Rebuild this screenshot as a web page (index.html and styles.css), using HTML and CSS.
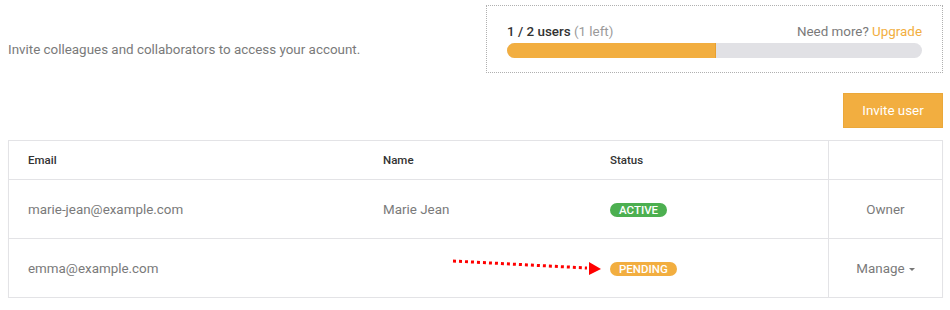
FILE: index.html
```html
<!DOCTYPE html>
<html lang="en">
<head>
    <meta charset="UTF-8">
    <meta name="viewport" content="width=device-width, initial-scale=1.0">
    <title>Users</title>
    <link rel="stylesheet" href="styles.css">
</head>
<body>

    <!-- Topo: descricao + uso do plano -->
    <div class="topo">
        <p class="descricao">Invite colleagues and collaborators to access your account.</p>

        <div class="uso">
            <div class="uso-linha">
                <span><strong>1 / 2 users</strong> <span class="restante">(1 left)</span></span>
                <span class="mais">Need more? <a href="#" class="upgrade">Upgrade</a></span>
            </div>
            <div class="barra">
                <div class="barra-cheia" style="width: 50%"></div>
            </div>
        </div>
    </div>

    <div class="acoes">
        <button class="botao-convidar">Invite user</button>
    </div>

    <!-- Tabela de usuarios -->
    <div class="tabela">
        <div class="linha cabecalho">
            <div class="celula">Email</div>
            <div class="celula">Name</div>
            <div class="celula">Status</div>
            <div class="celula acao"></div>
        </div>
        <div class="linha">
            <div class="celula">marie-jean@example.com</div>
            <div class="celula">Marie Jean</div>
            <div class="celula"><span class="selo ativo">ACTIVE</span></div>
            <div class="celula acao">Owner</div>
        </div>
        <div class="linha ultima">
            <div class="celula">emma@example.com</div>
            <div class="celula"></div>
            <div class="celula"><span class="selo pendente">PENDING</span></div>
            <div class="celula acao">Manage <span class="seta-menu"></span></div>
        </div>

        <!-- seta vermelha de anotacao -->
        <svg class="anotacao" viewBox="0 0 933 155" width="933" height="155">
            <line x1="444" y1="120" x2="578" y2="127" stroke="#ff0000" stroke-width="3" stroke-dasharray="3 3"/>
            <polygon points="580,121 592,128 580,134" fill="#ff0000"/>
        </svg>
    </div>

</body>
</html>
```

FILE: styles.css
```css
/* Estilos gerais */
body {
    margin: 0;
    font-family: Roboto, "Liberation Sans", Arial, sans-serif;
    font-size: 13.4px;
    color: #7a7a7a;
    background: #fff;
}

/* Topo */
.topo {
    display: flex;
    justify-content: space-between;
    align-items: flex-start;
    padding: 5px 7px 0 8px;
}

.descricao {
    margin: 35px 0 0;
    line-height: 20px;
}

.uso {
    width: 415px;
    padding: 16px 20px 14px;
    border: 1px dotted #b0b0b0;
}

.uso-linha {
    display: flex;
    justify-content: space-between;
    line-height: 20px;
}

.uso-linha strong {
    color: #333;
    font-weight: 500;
}

.restante {
    color: #9a9a9a;
}

.upgrade {
    color: #f2ae40;
    text-decoration: none;
}

.barra {
    margin-top: 1px;
    height: 15px;
    border-radius: 8px;
    background-color: #e1e1e5;
    overflow: hidden;
}

.barra-cheia {
    height: 100%;
    background-color: #f2ae40;
    border-right: 1px solid #e8a030;
}

/* Botao convidar */
.acoes {
    display: flex;
    justify-content: flex-end;
    padding-right: 7px;
    margin-top: 20px;
}

.botao-convidar {
    width: 100px;
    height: 35px;
    border: 1px solid #eba83a;
    background-color: #f2ae40;
    color: #fff;
    font-family: inherit;
    font-size: 13.4px;
    cursor: pointer;
}

/* Tabela */
.tabela {
    position: relative;
    width: 933px;
    margin: 12px 0 0 8px;
    border: 1px solid #e3e3e6;
    box-shadow: 0 1px 1px rgba(0, 0, 0, 0.04);
}

.linha {
    display: grid;
    grid-template-columns: 355px 227px 237px 1fr;
    height: 58px;
    border-bottom: 1px solid #e3e3e6;
}

.linha.ultima {
    border-bottom: none;
}

.linha.cabecalho {
    height: 38px;
    color: #333;
    font-size: 11.5px;
    font-weight: 500;
}

.celula {
    display: flex;
    align-items: center;
    padding-left: 19px;
}

.celula.acao {
    justify-content: center;
    padding-left: 0;
    border-left: 1px solid #e3e3e6;
}

.selo {
    display: inline-block;
    height: 14px;
    line-height: 14px;
    padding: 0 9px;
    border-radius: 7px;
    color: #fff;
    font-size: 11.5px;
    font-weight: 500;
    margin-top: 2px;
}

.ativo {
    background-color: #4caf50;
}

.pendente {
    background-color: #f2ae40;
}

.seta-menu {
    display: inline-block;
    margin-left: 4px;
    margin-top: 2px;
    border-left: 3px solid transparent;
    border-right: 3px solid transparent;
    border-top: 3px solid #777;
}

/* Seta de anotacao sobre a tabela */
.anotacao {
    position: absolute;
    left: 0;
    top: 0;
    pointer-events: none;
}
```
